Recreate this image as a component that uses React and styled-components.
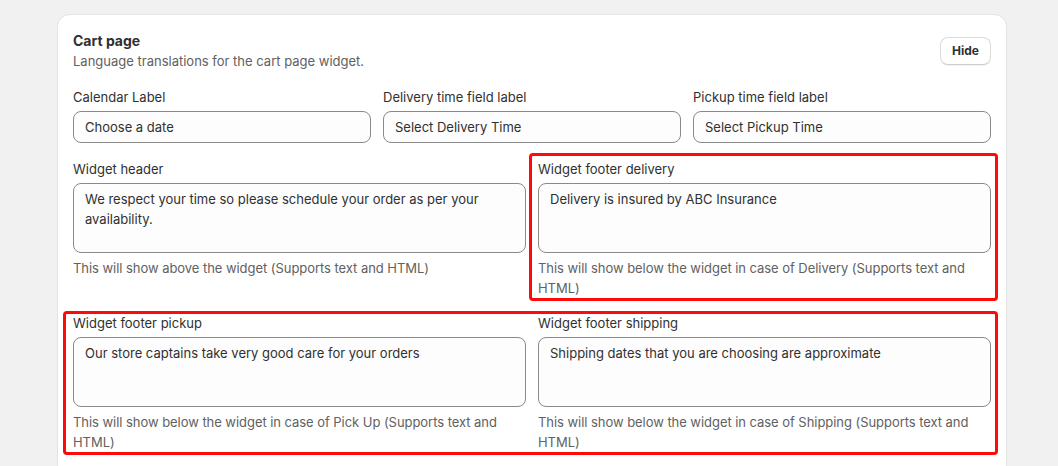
import React from "react";
import styled, { createGlobalStyle } from "styled-components";

const GlobalStyle = createGlobalStyle`
  html, body {
    margin: 0;
    padding: 0;
    background: #f1f1f1;
    font-family: Inter, "Noto Sans", "Liberation Sans", sans-serif;
    color: #303030;
    -webkit-font-smoothing: antialiased;
  }
  * {
    box-sizing: border-box;
  }
`;

const Page = styled.div`
  padding: 15px 52px 0 58px;
  min-height: 466px;
`;

const Card = styled.section`
  background: #ffffff;
  border-radius: 12px;
  box-shadow: 0 0 0 1px #e4e4e4, 0 1px 0 rgba(26, 26, 26, 0.07);
  padding: 16px 15px 24px;
`;

const Header = styled.div`
  display: flex;
  align-items: center;
  justify-content: space-between;
  margin-bottom: 16px;
`;

const Title = styled.h2`
  margin: 0;
  font-size: 14px;
  line-height: 20px;
  font-weight: 650;
  color: #303030;
`;

const Subtitle = styled.p`
  margin: 0;
  font-size: 13px;
  line-height: 20px;
  color: #616161;
`;

const Button = styled.button`
  font-family: inherit;
  font-size: 12px;
  font-weight: 650;
  line-height: 16px;
  color: #303030;
  background: #ffffff;
  border: 1px solid #dcdcdc;
  border-bottom-color: #cfcfcf;
  border-radius: 8px;
  padding: 5px 11px;
  box-shadow: 0 1px 0 rgba(0, 0, 0, 0.05);
  cursor: pointer;
`;

const Stack = styled.div`
  display: flex;
  flex-direction: column;
  gap: 16px;
`;

const Grid = styled.div`
  display: grid;
  grid-template-columns: repeat(${(p) => p.$cols}, 1fr);
  column-gap: 12px;
  align-items: start;
`;

// red annotation frame drawn over a field or a whole row
const Highlight = styled.div`
  position: relative;
  margin-top: ${(p) => p.$shift || 0}px;

  &::after {
    content: "";
    position: absolute;
    top: ${(p) => p.$top}px;
    left: ${(p) => p.$left}px;
    right: ${(p) => p.$right}px;
    bottom: ${(p) => p.$bottom}px;
    border: 3px solid #ff0a0a;
    border-radius: 4px;
    pointer-events: none;
  }
`;

const Field = styled.div`
  display: flex;
  flex-direction: column;
  min-width: 0;
`;

const Label = styled.label`
  font-size: 13px;
  line-height: 20px;
  color: #303030;
  margin-bottom: 4px;
`;

const Input = styled.input`
  font-family: inherit;
  font-size: 13px;
  line-height: 20px;
  height: 32px;
  width: 100%;
  padding: 5px 11px;
  color: #303030;
  background: #fdfdfd;
  border: 1px solid #8a8a8a;
  border-radius: 8px;
  outline: none;
`;

const TextArea = styled.textarea`
  font-family: inherit;
  font-size: 13px;
  line-height: 20px;
  height: 70px;
  width: 100%;
  padding: 5px 11px;
  color: #303030;
  background: #fdfdfd;
  border: 1px solid #8a8a8a;
  border-radius: 8px;
  resize: none;
  outline: none;
  display: block;
`;

const Help = styled.p`
  margin: 5px 0 0;
  font-size: 13px;
  line-height: 20px;
  letter-spacing: -0.05px;
  color: #616161;
`;

function TextField({ label, value }) {
  return (
    <Field>
      <Label>{label}</Label>
      <Input value={value} readOnly />
    </Field>
  );
}

function AreaField({ label, value, help }) {
  return (
    <Field>
      <Label>{label}</Label>
      <TextArea value={value} readOnly />
      <Help>{help}</Help>
    </Field>
  );
}

export default function App() {
  return (
    <>
      <GlobalStyle />
      <Page>
        <Card>
          <Header>
            <div>
              <Title>Cart page</Title>
              <Subtitle>Language translations for the cart page widget.</Subtitle>
            </div>
            <Button>Hide</Button>
          </Header>
          <Stack>
            <Grid $cols={3}>
              <TextField label="Calendar Label" value="Choose a date" />
              <TextField
                label="Delivery time field label"
                value="Select Delivery Time"
              />
              <TextField
                label="Pickup time field label"
                value="Select Pickup Time"
              />
            </Grid>
            <Grid $cols={2}>
              <AreaField
                label="Widget header"
                value="We respect your time so please schedule your order as per your availability."
                help="This will show above the widget (Supports text and HTML)"
              />
              <Highlight $top={-6} $left={-9} $right={-7} $bottom={-3}>
                <AreaField
                  label="Widget footer delivery"
                  value="Delivery is insured by ABC Insurance"
                  help="This will show below the widget in case of Delivery (Supports text and HTML)"
                />
              </Highlight>
            </Grid>
            <Highlight $shift={-1} $top={-2} $left={-10} $right={-7} $bottom={-3}>
              <Grid $cols={2}>
                <AreaField
                  label="Widget footer pickup"
                  value="Our store captains take very good care for your orders"
                  help="This will show below the widget in case of Pick Up (Supports text and HTML)"
                />
                <AreaField
                  label="Widget footer shipping"
                  value="Shipping dates that you are choosing are approximate"
                  help="This will show below the widget in case of Shipping (Supports text and HTML)"
                />
              </Grid>
            </Highlight>
          </Stack>
        </Card>
      </Page>
    </>
  );
}
